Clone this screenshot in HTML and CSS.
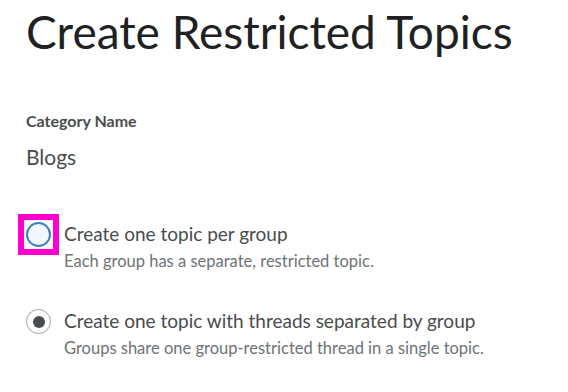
FILE: index.html
```html
<!DOCTYPE html>
<html lang="en">

<head>
    <meta charset="UTF-8">
    <meta name="viewport" content="width=device-width, initial-scale=1.0">
    <title>Create Restricted Topics</title>
    <link rel="stylesheet" href="styles.css">
</head>

<body>

    <h1>Create Restricted Topics</h1>

    <!-- Category -->
    <div class="category">
        <div class="field-label">Category Name</div>
        <div class="field-value">Blogs</div>
    </div>

    <!-- Topic options -->
    <div class="options">
        <label class="option">
            <span class="focus-ring">
                <input type="radio" name="topic-type" class="radio focused">
            </span>
            <span class="option-text">
                <span class="option-title">Create one topic per group</span>
                <span class="option-desc">Each group has a separate, restricted topic.</span>
            </span>
        </label>

        <label class="option">
            <input type="radio" name="topic-type" class="radio" checked>
            <span class="option-text">
                <span class="option-title">Create one topic with threads separated by group</span>
                <span class="option-desc">Groups share one group-restricted thread in a single topic.</span>
            </span>
        </label>
    </div>

</body>

</html>
```

FILE: styles.css
```css
body {
    margin: 0;
    padding: 0 26px;
    font-family: Lato, "Open Sans", sans-serif;
    background: #fff;
    color: #494c4e;
}

h1 {
    margin: 0;
    padding-top: 5px;
    font-size: 46px;
    font-weight: 400;
    line-height: 54px;
    color: #202122;
}

.category {
    margin-top: 52px;
}

.field-label {
    font-size: 16px;
    font-weight: 700;
    line-height: 20px;
}

.field-value {
    margin-top: 12px;
    font-size: 21px;
    line-height: 28px;
}

.options {
    margin-top: 50px;
    display: flex;
    flex-direction: column;
    gap: 34px;
}

.option {
    display: flex;
    align-items: flex-start;
    cursor: pointer;
}

.option-text {
    display: flex;
    flex-direction: column;
}

.option-title {
    font-size: 19px;
    line-height: 26px;
}

.option-desc {
    padding-top: 1px;
    font-size: 16.5px;
    line-height: 26px;
    color: #6e7376;
}

/* Custom radio buttons */
.radio {
    appearance: none;
    -webkit-appearance: none;
    flex: none;
    width: 25px;
    height: 25px;
    margin: 1px 13px 0 0;
    border: 1.5px solid #a0a3a5;
    border-radius: 50%;
    background: #fff;
    display: grid;
    place-items: center;
}

.radio:checked::before {
    content: "";
    width: 12px;
    height: 12px;
    border-radius: 50%;
    background: #494c4e;
}

/* keyboard focus box around the first radio */
.focus-ring {
    display: flex;
    flex: none;
    margin: -7px 5px 0 -8px;
    padding: 2px;
    border: 6px solid #ff00cc;
    background: #fdf6fb;
}

.focus-ring .radio {
    margin: 0;
}

.radio.focused {
    border: 2px solid #3a82b8;
    background: #f1f7ff;
}
```
